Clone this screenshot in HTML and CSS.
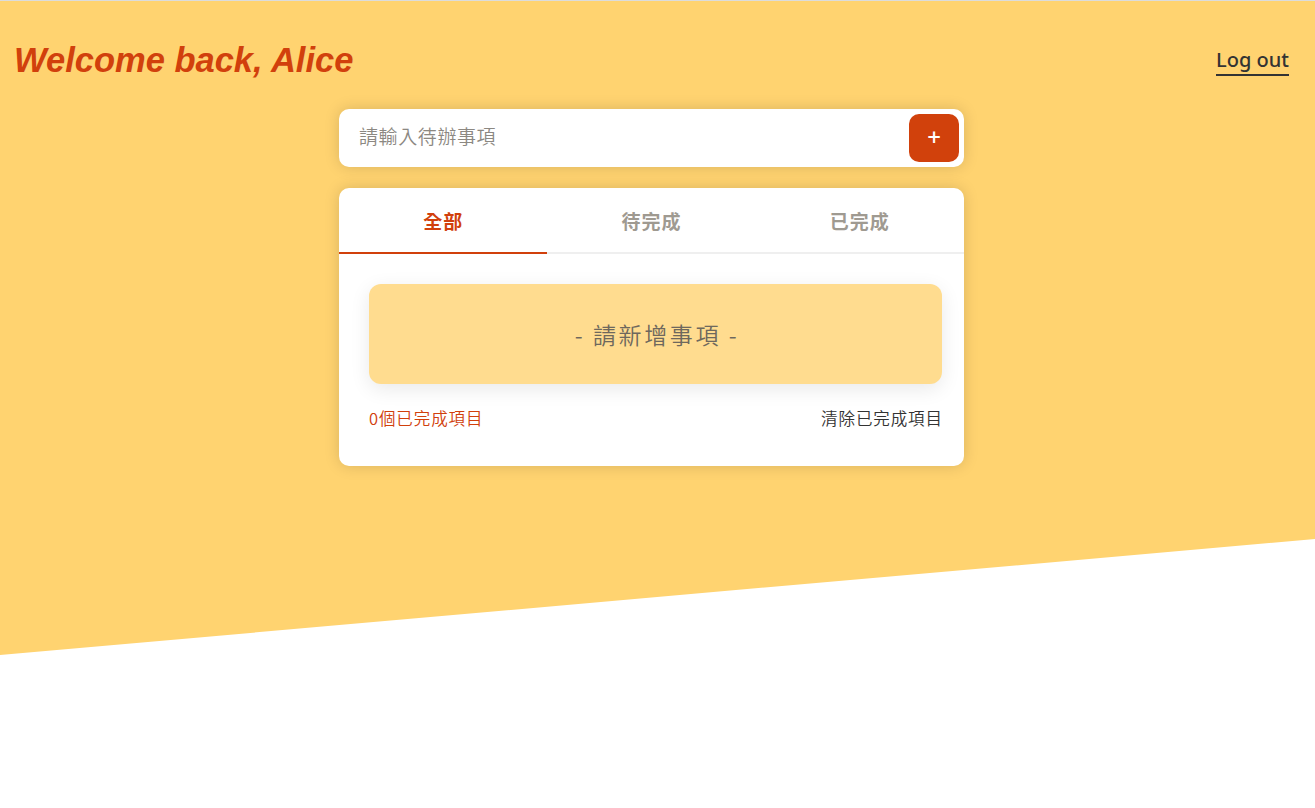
FILE: index.html
```html
<!DOCTYPE html>
<html lang="zh-Hant">
<head>
<meta charset="utf-8">
<title>Todo</title>
<link rel="stylesheet" href="styles.css">
</head>
<body>
<div class="bg"></div>
<header class="header">
  <h1 class="title">Welcome back, Alice</h1>
  <a class="logout" href="#">Log out</a>
</header>
<main class="main">
  <div class="input-card">
    <input class="todo-input" type="text" placeholder="請輸入待辦事項">
    <button class="add-btn">+</button>
  </div>
  <section class="list-card">
    <nav class="tabs">
      <a class="tab active" href="#">全部</a>
      <a class="tab" href="#">待完成</a>
      <a class="tab" href="#">已完成</a>
    </nav>
    <div class="list-body">
      <div class="empty">- 請新增事項 -</div>
      <div class="list-footer">
        <span class="count">0個已完成項目</span>
        <a class="clear" href="#">清除已完成項目</a>
      </div>
    </div>
  </section>
</main>
</body>
</html>
```

FILE: styles.css
```css
* { box-sizing: border-box; }
html, body { margin: 0; padding: 0; }
body {
  position: relative;
  min-height: 808px;
  border-top: 1px solid #dcdcdc;
  font-family: "Noto Sans CJK TC", "Noto Sans", sans-serif;
  background: #fff;
}
.bg {
  position: absolute;
  top: 0; left: 0;
  width: 100%;
  height: 654px;
  background: #ffd370;
  clip-path: polygon(0 0, 100% 0, 100% 538px, 0 100%);
  z-index: -1;
}
.header {
  display: flex;
  justify-content: space-between;
  align-items: flex-start;
  padding: 36px 26px 0 14px;
  height: 108px;
}
.title {
  margin: 0;
  font-family: "Liberation Sans", Arial, sans-serif;
  font-style: italic;
  font-weight: bold;
  font-size: 34.5px;
  line-height: 46px;
  color: #d1400c;
}
.logout {
  margin-top: 10px;
  font-family: "Noto Sans", sans-serif;
  font-size: 20px;
  font-weight: 500;
  line-height: 26px;
  color: #333;
  text-decoration: none;
  border-bottom: 2px solid #333;
  padding-bottom: 1px;
}
.main {
  width: 625px;
  margin-left: calc(50% - 318.5px);
  display: flex;
  flex-direction: column;
  gap: 21px;
}
.input-card {
  display: flex;
  align-items: center;
  height: 58px;
  background: #fff;
  border-radius: 10px;
  padding: 5px 5px 5px 20px;
  box-shadow: 0 0 15px rgba(0,0,0,0.15);
}
.todo-input {
  flex: 1;
  border: none;
  outline: none;
  font-family: "Noto Sans CJK TC", sans-serif;
  font-size: 19px;
  font-weight: 350;
  letter-spacing: 0.6px;
  line-height: 26px;
  padding: 0 0 4px 0;
  color: #333;
  background: transparent;
}
.todo-input::placeholder { color: #8c8882; }
.add-btn {
  width: 50px;
  height: 48px;
  border: none;
  border-radius: 10px;
  background: #d1410c;
  color: #fff;
  font-family: "Noto Sans", sans-serif;
  font-size: 24px;
  font-weight: 500;
  line-height: 1;
  padding: 0 0 3px;
}
.list-card {
  background: #fff;
  border-radius: 10px;
  box-shadow: 0 0 15px rgba(0,0,0,0.15);
  overflow: hidden;
}
.tabs {
  display: flex;
  height: 66px;
  border-bottom: 2px solid #efefef;
}
.tab {
  flex: 1;
  display: flex;
  align-items: center;
  justify-content: center;
  font-size: 19px;
  letter-spacing: 1px;
  font-weight: bold;
  color: #9f9a91;
  text-decoration: none;
  margin-bottom: -2px;
  border-bottom: 2px solid transparent;
}
.tab.active {
  color: #d1400c;
  border-bottom-color: #d1400c;
}
.list-body {
  padding: 30px 22px 36px 30px;
  display: flex;
  flex-direction: column;
}
.empty {
  height: 100px;
  border-radius: 12px;
  background: #ffdc8f;
  box-shadow: 0 5px 20px rgba(0,0,0,0.09);
  display: flex;
  align-items: center;
  justify-content: center;
  font-size: 23px;
  font-weight: 350;
  letter-spacing: 2.6px;
  color: #6e685d;
  padding-left: 3px;
}
.list-footer {
  display: flex;
  justify-content: space-between;
  margin-top: 22px;
  font-size: 16.5px;
  font-weight: 350;
  letter-spacing: 0.9px;
  line-height: 24px;
}
.count { color: #d1400c; }
.clear { color: #333; text-decoration: none; margin-right: -0.9px; }
```
